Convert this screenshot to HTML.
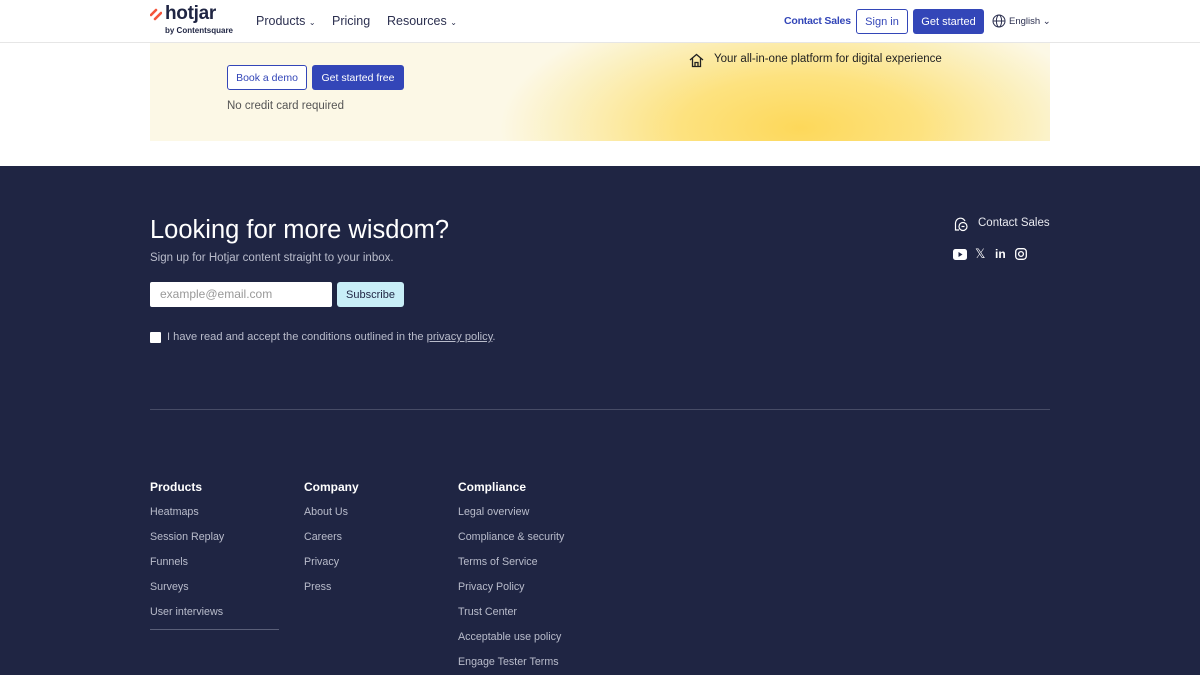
<!DOCTYPE html>
<html><head><meta charset="utf-8"><style>
*{margin:0;padding:0;box-sizing:border-box}
body{width:1200px;height:675px;overflow:hidden;font-family:"Liberation Sans",sans-serif;background:#fff;position:relative}
.a{position:absolute;white-space:nowrap}
header{position:absolute;left:0;top:0;width:1200px;height:43px;background:#fff;border-bottom:1px solid #e6e6e6;z-index:2}
.hero{position:absolute;left:150px;top:43px;width:900px;height:98px;background:radial-gradient(ellipse 300px 130px at 650px 85px,#fdd85a 0%,#fde27f 40%,#fbf1c4 80%,#fcf8e6 100%)}
.footer{position:absolute;left:0;top:166px;width:1200px;height:509px;background:#1f2543}
.btn{position:absolute;font-size:11px;display:flex;align-items:center;justify-content:center;border-radius:3px}
.fl{color:#b9bccb;font-size:10.7px}
.fh{color:#fff;font-size:12px;font-weight:bold}
</style></head><body>
<header>
<svg class="a" style="left:150px;top:8px" width="12" height="13" viewBox="0 0 12 13"><path d="M1 7 L6 2 M5 11 L11 5" stroke="#f4553b" stroke-width="2.6" stroke-linecap="round"/></svg>
<div class="a" style="left:165px;top:3px;font-size:19px;font-weight:bold;color:#1f2543;letter-spacing:-0.3px">hotjar</div>
<div class="a" style="left:165px;top:26px;font-size:8px;font-weight:bold;color:#1f2543">by Contentsquare</div>
<div class="a" style="left:256px;top:14px;font-size:12.5px;color:#2c3050">Products <span style="font-size:8px">⌄</span></div>
<div class="a" style="left:332px;top:14px;font-size:12.5px;color:#2c3050">Pricing</div>
<div class="a" style="left:387px;top:14px;font-size:12.5px;color:#2c3050">Resources <span style="font-size:8px">⌄</span></div>
<div class="a" style="left:784px;top:15px;font-size:10.5px;font-weight:bold;color:#3346b8;letter-spacing:-0.2px">Contact Sales</div>
<div class="btn" style="left:856px;top:9px;width:52px;height:25px;border:1px solid #3346b8;color:#3346b8;font-size:11px">Sign in</div>
<div class="btn" style="left:913px;top:9px;width:71px;height:25px;background:#3346b8;color:#fff;font-size:11px">Get started</div>
<svg class="a" style="left:992px;top:14px" width="14" height="14" viewBox="0 0 14 14" fill="none" stroke="#2c3050" stroke-width="1"><circle cx="7" cy="7" r="6"/><ellipse cx="7" cy="7" rx="2.6" ry="6"/><path d="M1 7h12"/></svg>
<div class="a" style="left:1009px;top:16px;font-size:9.5px;color:#2c3050">English ⌄</div>
</header>
<div class="hero"></div>
<div class="btn" style="left:227px;top:65px;width:80px;height:25px;border:1px solid #3346b8;color:#3346b8;background:#fff;font-size:10.5px">Book a demo</div>
<div class="btn" style="left:312px;top:65px;width:92px;height:25px;background:#3346b8;color:#fff;font-size:10.5px">Get started free</div>
<div class="a" style="left:227px;top:100px;font-size:11.5px;color:#555">No credit card required</div>
<svg class="a" style="left:689px;top:53px" width="15" height="15" viewBox="0 0 15 15" fill="none" stroke="#222" stroke-width="1.3"><path d="M1 7L7.5 1.5 14 7M3.5 5v8.5h8V5M6 13.5v-4h3v4"/></svg>
<div class="a" style="left:714px;top:53px;font-size:11.5px;color:#222">Your all-in-one platform for digital experience</div>
<div class="footer"></div>
<div class="a" style="left:150px;top:216px;font-size:25.5px;color:#fff">Looking for more wisdom?</div>
<div class="a" style="left:150px;top:252px;font-size:11.5px;color:#b9bccb">Sign up for Hotjar content straight to your inbox.</div>
<div class="a" style="left:150px;top:282px;width:182px;height:25px;background:#fff;border-radius:2px;font-size:12px;color:#999;padding:5px 10px">example@email.com</div>
<div class="btn" style="left:337px;top:282px;width:67px;height:25px;background:#c8eef7;color:#1f2543;font-size:11px">Subscribe</div>
<div class="a" style="left:150px;top:332px;width:11px;height:11px;background:#fff;border-radius:1px"></div>
<div class="a" style="left:167px;top:331px;font-size:11.1px;color:#b9bccb">I have read and accept the conditions outlined in the <u>privacy policy</u>.</div>
<svg class="a" style="left:953px;top:216px" width="16" height="16" viewBox="0 0 16 16" fill="none" stroke="#fff" stroke-width="1.2"><path d="M6 14H2.5V7A5 5 0 0 1 12 5"/><circle cx="10" cy="10.5" r="4"/><path d="M8.5 10.5h3"/></svg>
<div class="a" style="left:978px;top:217px;font-size:11.5px;color:#e8e9ef">Contact Sales</div>
<svg class="a" style="left:953px;top:249px" width="14" height="11" viewBox="0 0 14 11"><rect width="14" height="11" rx="2.5" fill="#fff"/><path d="M5.5 3v5l4-2.5z" fill="#1f2543"/></svg>
<div class="a" style="left:975px;top:246px;font-size:13px;color:#fff">𝕏</div>
<div class="a" style="left:995px;top:247px;font-size:12px;font-weight:bold;color:#fff">in</div>
<svg class="a" style="left:1015px;top:248px" width="12" height="12" viewBox="0 0 12 12" fill="none" stroke="#fff" stroke-width="1.3"><rect x=".7" y=".7" width="10.6" height="10.6" rx="3"/><circle cx="6" cy="6" r="2.4"/></svg>
<div class="a" style="left:150px;top:409px;width:900px;height:1px;background:#474c66"></div>
<div class="a fh" style="left:150px;top:480px">Products</div>
<div class="a fh" style="left:304px;top:480px">Company</div>
<div class="a fh" style="left:458px;top:480px">Compliance</div>
<div class="a fl" style="left:150px;top:506px">Heatmaps</div>
<div class="a fl" style="left:150px;top:531px">Session Replay</div>
<div class="a fl" style="left:150px;top:556px">Funnels</div>
<div class="a fl" style="left:150px;top:581px">Surveys</div>
<div class="a fl" style="left:150px;top:606px">User interviews</div>
<div class="a" style="left:150px;top:629px;width:129px;height:1px;background:#5a5f78"></div>
<div class="a fl" style="left:304px;top:506px">About Us</div>
<div class="a fl" style="left:304px;top:531px">Careers</div>
<div class="a fl" style="left:304px;top:556px">Privacy</div>
<div class="a fl" style="left:304px;top:581px">Press</div>
<div class="a fl" style="left:458px;top:506px">Legal overview</div>
<div class="a fl" style="left:458px;top:531px">Compliance &amp; security</div>
<div class="a fl" style="left:458px;top:556px">Terms of Service</div>
<div class="a fl" style="left:458px;top:581px">Privacy Policy</div>
<div class="a fl" style="left:458px;top:606px">Trust Center</div>
<div class="a fl" style="left:458px;top:631px">Acceptable use policy</div>
<div class="a fl" style="left:458px;top:656px">Engage Tester Terms</div>
</body></html>
